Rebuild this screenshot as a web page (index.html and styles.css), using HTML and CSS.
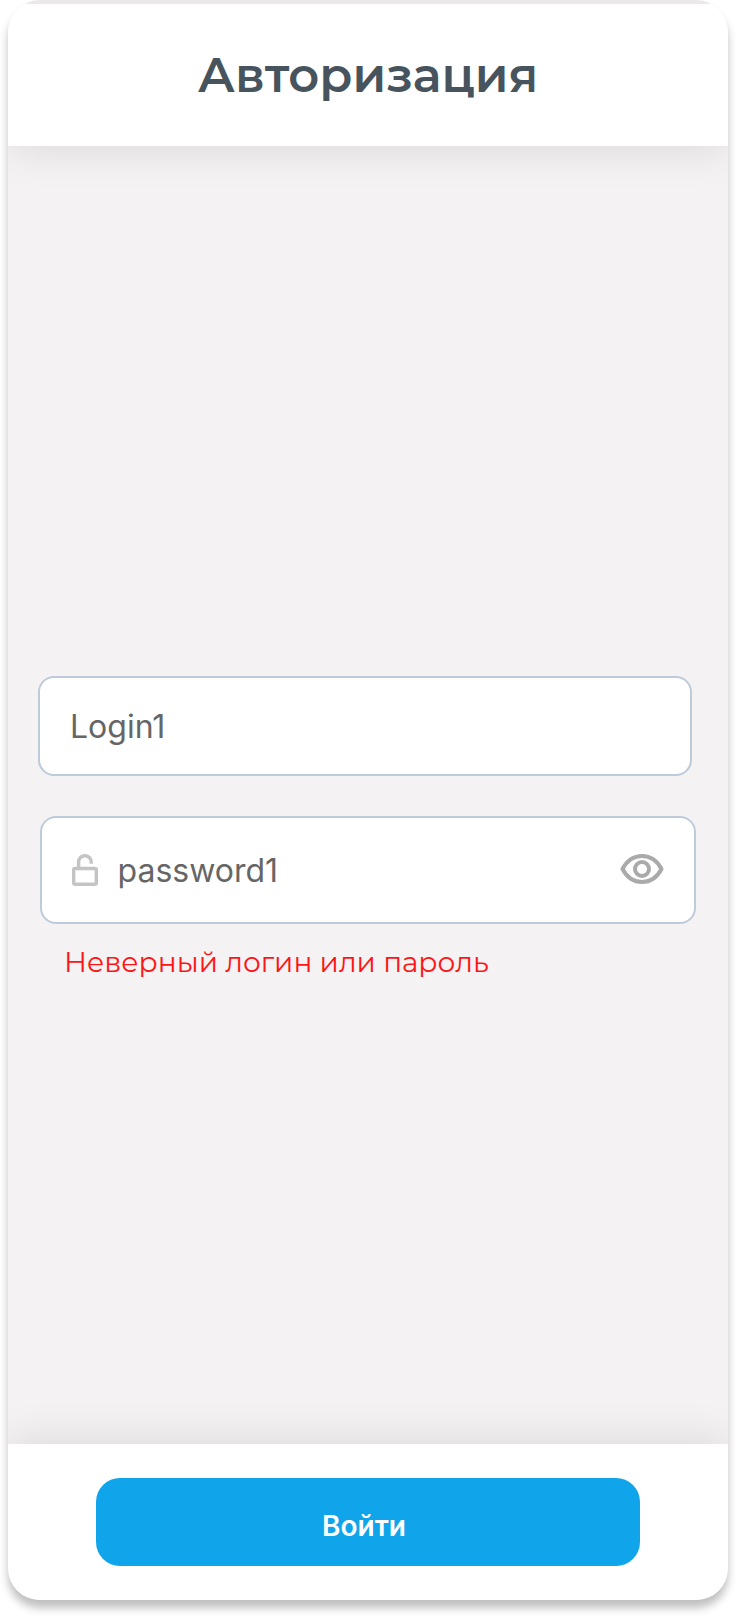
FILE: index.html
```html
<!DOCTYPE html>
<html lang="ru">
<head>
<meta charset="utf-8">
<title>Авторизация</title>
<link rel="stylesheet" href="styles.css">
</head>
<body>
<div class="screen">
  <header class="header"><h1 class="title">Авторизация</h1></header>
  <main class="form">
    <div class="field field-login"><span class="value">Login1</span></div>
    <div class="field field-password">
      <svg class="lock" width="26" height="32" viewBox="0 0 26 32" fill="none" stroke="#c4c4c4" stroke-width="3.4">
        <rect x="1.700" y="14.500" width="22.600" height="15.800" rx="1.500"/>
        <path d="M6.600 14.500V8a6.300 6.300 0 0 1 12.600 0v1.800"/>
      </svg>
      <span class="value">password1</span>
      <svg class="eye" width="44" height="30" viewBox="0 0 44 30" fill="none" stroke="#aaa" stroke-width="4">
        <path d="M2.500 15C7 6.500 14 2 22 2s15 4.500 19.500 13C37 23.500 30 28 22 28S7 23.500 2.500 15Z" stroke-linejoin="round"/>
        <circle cx="22" cy="15" r="7"/>
      </svg>
    </div>
    <p class="error">Неверный логин или пароль</p>
  </main>
  <footer class="footer"><button class="submit" type="button">Войти</button></footer>
</div>
</body>
</html>
```
FILE: styles.css
```css
* { box-sizing: border-box; }
body { margin: 0; background: #fff; }
.screen {
  display: flex;
  flex-direction: column;
  width: 720px;
  height: 1600px;
  margin: 0 8px 16px;
  padding-top: 4px;
  overflow: hidden;
  border-radius: 32px;
  background: #f4f2f3;
  box-shadow: 0 8px 8px rgba(0, 0, 0, .25);
}
.header {
  display: flex;
  justify-content: center;
  height: 142px;
  padding-top: 39px;
  background: #fff;
  box-shadow: 0 4px 40px rgba(0, 0, 0, .1);
}
.title {
  margin: 0;
  font: 600 48px/64px Montserrat, Lato, "Open Sans", sans-serif;
  color: #48545d;
  white-space: nowrap;
}
.form {
  display: flex;
  flex: 1;
  flex-direction: column;
  padding: 530px 32px 0 30px;
}
.field {
  display: flex;
  align-items: center;
  border: 2px solid #becbda;
  border-radius: 16px;
  background: #fff;
  font: 400 32px/40px Inter, sans-serif;
  color: #666;
}
.value { padding-top: 2px; }
.field-login { width: 654px; height: 100px; padding-left: 30px; }
.field-password { width: 656px; height: 108px; margin: 40px 0 0 2px; padding: 0 30px; }
.lock { margin-right: 19.5px; }
.eye { margin: 0 0 2px auto; }
.error {
  margin: 18px 0 0 26px;
  font: 400 28px/40px Montserrat, Lato, "Open Sans", sans-serif;
  color: #ff1414;
  white-space: nowrap;
}
.footer {
  display: flex;
  justify-content: center;
  height: 156px;
  padding-top: 34px;
  background: #fff;
  box-shadow: 0 -4px 40px rgba(0, 0, 0, .1);
}
.submit {
  width: 544px;
  height: 88px;
  padding: 8px 8px 0 0;
  border: 0;
  border-radius: 24px;
  background: #10a5ea;
  font: 600 28px/40px Inter, sans-serif;
  color: #fff;
}
```
